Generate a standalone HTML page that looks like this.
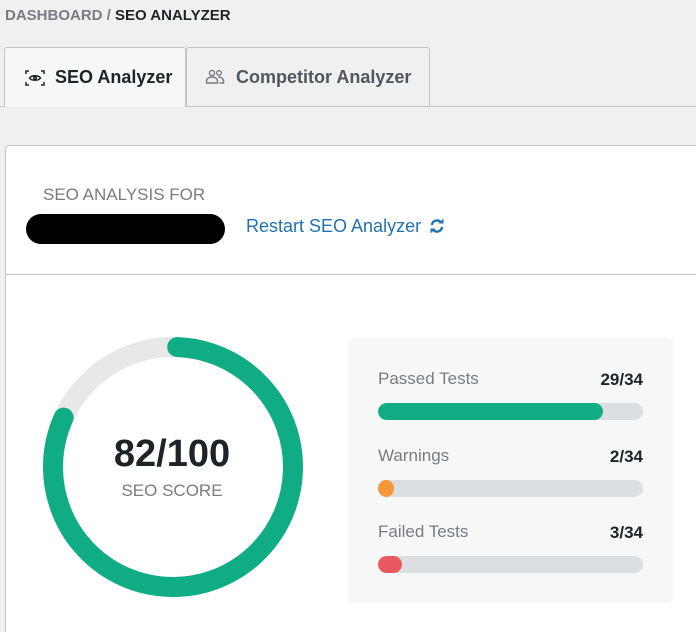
<!DOCTYPE html>
<html><head><meta charset="utf-8"><style>
*{margin:0;padding:0;box-sizing:border-box}
html,body{width:696px;height:632px;overflow:hidden}
body{background:#f0f0f1;font-family:"Liberation Sans",sans-serif;position:relative}
.abs{position:absolute}
.bc{left:5px;top:7px;font-size:15px;font-weight:bold;color:#1d2327;letter-spacing:0}
.bc span{color:#787c82}
.tab{top:47px;height:59px;border:1px solid #c3c4c7;border-bottom:none;border-radius:3px 3px 0 0;display:flex;align-items:center;font-size:18px;font-weight:bold}
.card{left:5px;top:145px;width:691px;height:487px;background:#fff;border:1px solid #c3c4c7;border-right:none;border-bottom:none;border-radius:4px 0 0 0}
.lbl{font-size:17px;color:#787c82}
.val{font-size:17px;font-weight:bold;color:#1d2327;text-align:right}
.bar{left:378px;width:265px;height:17px;border-radius:9px;background:#dcdfe2;overflow:hidden}
.bar div{height:100%;border-radius:9px}
</style></head><body>
<div class="abs bc"><span>DASHBOARD</span> <span>/</span> SEO ANALYZER</div>
<div class="abs" style="left:0;top:106px;width:696px;height:1px;background:#c3c4c7"></div>
<div class="abs tab" style="left:4px;width:182px;background:#f6f7f7;height:60px;color:#1d2327;padding-left:20px">
<svg width="20" height="18" viewBox="0 0 20 18" style="margin-right:10px" fill="none" stroke="#1d2327" stroke-width="1.5"><path d="M1 5V2h3M16 2h3v3M19 13v3h-3M4 16H1v-3"/><path d="M4.5 9c2-3 9-3 11 0c-2 3-9 3-11 0z"/><circle cx="10" cy="9" r="1.3"/></svg>SEO Analyzer</div>
<div class="abs tab" style="left:186px;width:244px;background:#f0f0f1;color:#50575e;padding-left:18px">
<svg width="20" height="18" viewBox="0 0 20 18" style="margin-right:11px" fill="none" stroke="#787c82" stroke-width="1.4"><circle cx="7" cy="5" r="2.6"/><circle cx="14" cy="5" r="2.3"/><path d="M1.5 15v-2c0-2.5 2.5-4 5.5-4s5.5 1.5 5.5 4v2z"/><path d="M13 9c3 0 5.5 1.5 5.5 4v2h-4"/></svg>Competitor Analyzer</div>
<div class="abs card"></div>
<div class="abs" style="left:5px;top:274px;width:691px;height:1px;background:#c3c4c7"></div>
<div class="abs lbl" style="left:43px;top:185px;font-size:17px">SEO ANALYSIS FOR</div>
<div class="abs" style="left:26px;top:214px;width:199px;height:30px;background:#000;border-radius:15px"></div>
<div class="abs" style="left:246px;top:216px;font-size:18px;color:#2271b1">Restart SEO Analyzer <svg width="16" height="16" viewBox="0 0 16 16" style="vertical-align:-2px;margin-left:3px"><path d="M3 7a5 5 0 0 1 9-2.5" stroke="#2271b1" stroke-width="2.4" fill="none"/><path d="M9.5 5.5h5v-5z" fill="#2271b1"/><path d="M13 9a5 5 0 0 1-9 2.5" stroke="#2271b1" stroke-width="2.4" fill="none"/><path d="M6.5 10.5h-5v5z" fill="#2271b1"/></svg></div>
<svg class="abs" style="left:42px;top:337px" width="262" height="262" viewBox="0 0 262 262">
<circle cx="131" cy="130" r="120" fill="none" stroke="#e8e8e8" stroke-width="20"/>
<circle cx="131" cy="130" r="120" fill="none" stroke="#10ad85" stroke-width="20" stroke-linecap="round" stroke-dasharray="612 1000" transform="rotate(-88 131 130)"/>
</svg>
<div class="abs" style="left:72px;top:433px;width:200px;text-align:center;font-size:38px;font-weight:bold;color:#1d2327">82/100</div>
<div class="abs" style="left:72px;top:481px;width:200px;text-align:center;font-size:17px;color:#787c82">SEO SCORE</div>
<div class="abs" style="left:348px;top:338px;width:325px;height:265px;background:#f6f7f7;border-radius:6px"></div>
<div class="abs lbl" style="left:378px;top:369px">Passed Tests</div><div class="abs val" style="left:543px;top:370px;width:100px">29/34</div>
<div class="abs bar" style="top:403px"><div style="width:225px;background:#10ad85"></div></div>
<div class="abs lbl" style="left:378px;top:446px">Warnings</div><div class="abs val" style="left:543px;top:447px;width:100px">2/34</div>
<div class="abs bar" style="top:480px"><div style="width:16px;background:#f7973a"></div></div>
<div class="abs lbl" style="left:378px;top:522px">Failed Tests</div><div class="abs val" style="left:543px;top:523px;width:100px">3/34</div>
<div class="abs bar" style="top:556px"><div style="width:24px;background:#e9595f"></div></div>
</body></html>
